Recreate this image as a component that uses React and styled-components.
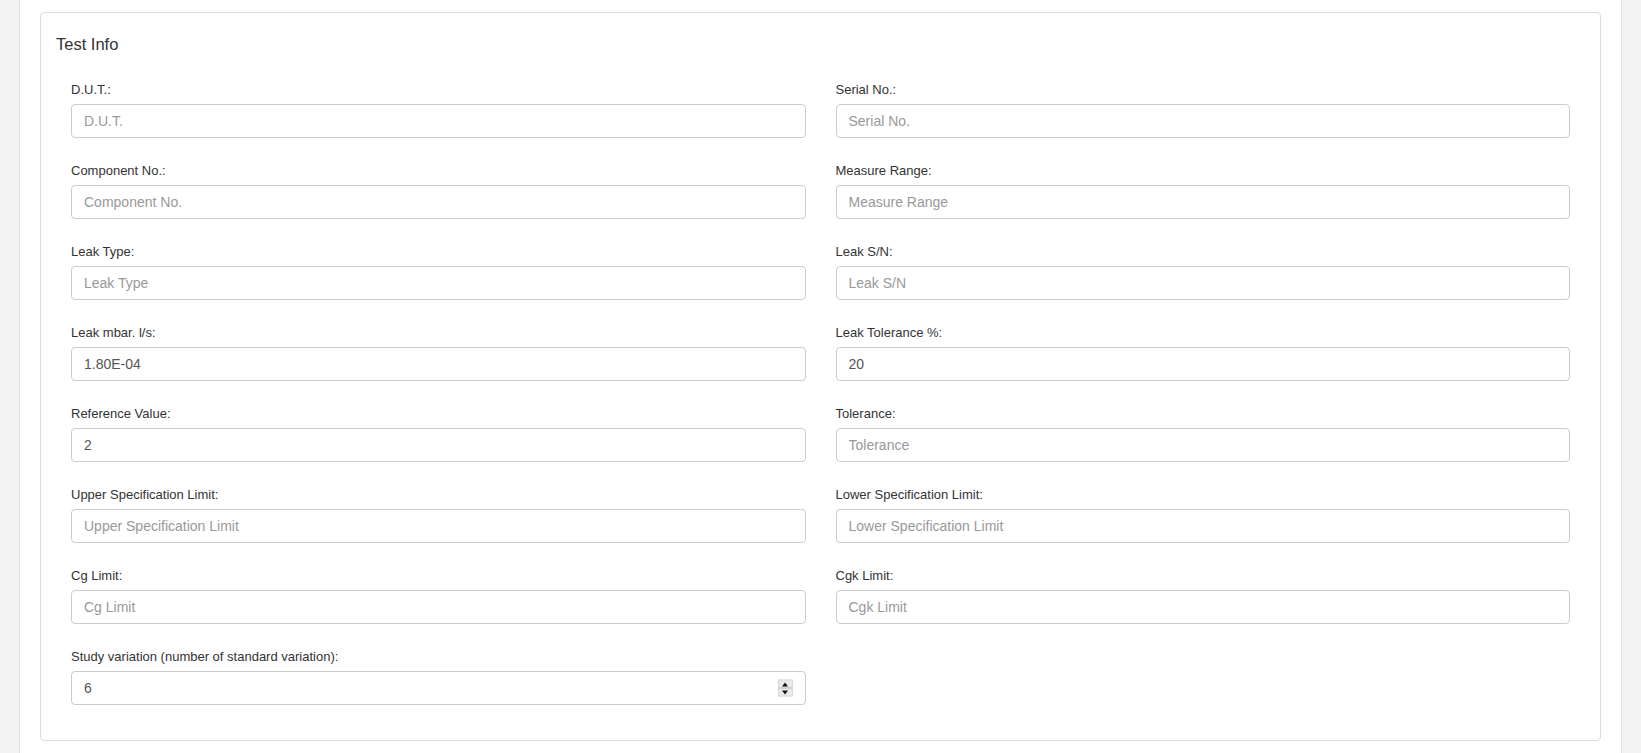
import styled, {createGlobalStyle} from "styled-components";

const GlobalStyle = createGlobalStyle`
  * {
    box-sizing: border-box;
  }
  body {
    margin: 0;
    background: #f4f4f4;
    font-family: "Liberation Sans", Arial, Helvetica, sans-serif;
    color: #333;
  }
`;

const Page = styled.div`
  width: 1603px;
  min-height: 100vh;
  margin: 0 auto;
  padding: 12px 20px 0;
  background: #fff;
  border-left: 1px solid #e2e2e2;
  border-right: 1px solid #e2e2e2;
`;

const Panel = styled.section`
  border: 1px solid #dcdcdc;
  border-radius: 4px;
  background: #fff;
  padding: 22px 15px 35px;
`;

const Title = styled.h3`
  margin: 0 0 27px;
  font-size: 16.5px;
  line-height: 19px;
  font-weight: normal;
  color: #333;
`;

const Form = styled.form`
  display: grid;
  grid-template-columns: 1fr 1fr;
  column-gap: 30px;
  row-gap: 24px;
  padding: 0 15px;
`;

const Group = styled.div`
  display: flex;
  flex-direction: column;
`;

const Label = styled.label`
  font-size: 13px;
  line-height: 18px;
  margin-bottom: 5px;
  color: #333;
`;

const InputWrap = styled.div`
  position: relative;
`;

const Input = styled.input`
  display: block;
  width: 100%;
  height: 34px;
  padding: 6px 12px;
  font-family: inherit;
  font-size: 14px;
  color: #555;
  background: #fff;
  border: 1px solid #ccc;
  border-radius: 4px;
  outline: none;
  -moz-appearance: textfield;

  &::placeholder {
    color: #999;
  }

  &::-webkit-inner-spin-button,
  &::-webkit-outer-spin-button {
    -webkit-appearance: none;
    margin: 0;
  }
`;

const Spinner = styled.div`
  position: absolute;
  right: 13px;
  top: 50%;
  transform: translateY(-50%);
  width: 15px;
  height: 17px;
  display: flex;
  flex-direction: column;
  background: #e9e9e9;
  border: 1px solid #dadada;
`;

const SpinButton = styled.span`
  flex: 1;
  display: flex;
  align-items: center;
  justify-content: center;
  border-top: ${(p) => (p.down ? "1px solid #b8b8b8" : "none")};

  &::before {
    content: "";
    width: 0;
    height: 0;
    border-left: 3.5px solid transparent;
    border-right: 3.5px solid transparent;
    ${(p) =>
      p.down ? "border-top: 4px solid #111;" : "border-bottom: 4px solid #111;"}
  }
`;

const fields = [
  {label: "D.U.T."},
  {label: "Serial No."},
  {label: "Component No."},
  {label: "Measure Range"},
  {label: "Leak Type"},
  {label: "Leak S/N"},
  {label: "Leak mbar. l/s", value: "1.80E-04"},
  {label: "Leak Tolerance %", value: "20"},
  {label: "Reference Value", value: "2"},
  {label: "Tolerance"},
  {label: "Upper Specification Limit"},
  {label: "Lower Specification Limit"},
  {label: "Cg Limit"},
  {label: "Cgk Limit"},
  {label: "Study variation (number of standard variation)", value: "6", number: true},
];

const Field = ({label, value, number}) => (
  <Group>
    <Label>{label}:</Label>
    <InputWrap>
      <Input
        type={number ? "number" : "text"}
        placeholder={label}
        defaultValue={value}
      />
      {number && (
        <Spinner>
          <SpinButton/>
          <SpinButton down/>
        </Spinner>
      )}
    </InputWrap>
  </Group>
);

const App = () => {
  return (
    <>
      <GlobalStyle/>
      <Page>
        <Panel>
          <Title>Test Info</Title>
          <Form onSubmit={(e) => e.preventDefault()}>
            {fields.map((f) => (
              <Field key={f.label} {...f}/>
            ))}
          </Form>
        </Panel>
      </Page>
    </>
  );
};

export default App;
